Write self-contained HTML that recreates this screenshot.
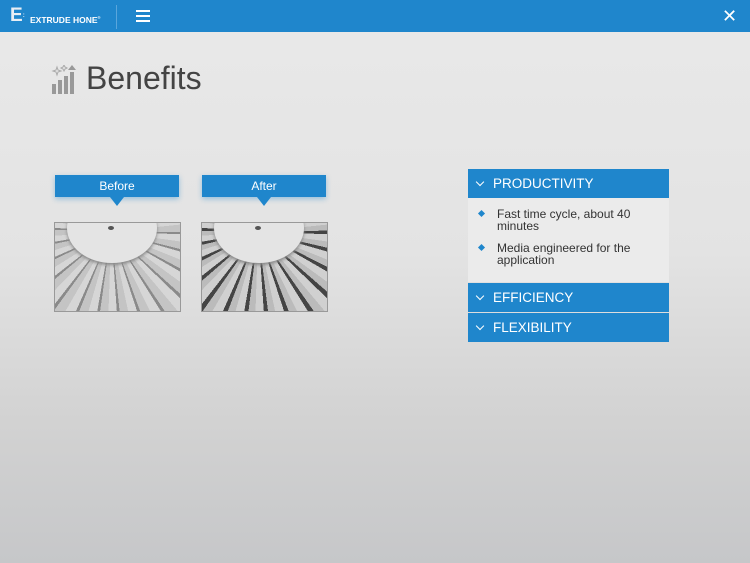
<!DOCTYPE html>
<html><head><style>
*{margin:0;padding:0;box-sizing:border-box}
body{width:750px;height:563px;overflow:hidden;font-family:"Liberation Sans",sans-serif;background:linear-gradient(180deg,#e9e9e9 0%,#e3e3e3 45%,#d2d2d2 75%,#c6c7c9 100%);position:relative}
.hdr{position:absolute;left:0;top:0;width:750px;height:32px;background:#1f86cc}
.abs{position:absolute}
.tag{position:absolute;height:22px;background:#1f86cc;color:#fff;font-size:12px;text-align:center;line-height:22px;box-shadow:0 2px 5px rgba(31,134,204,.4)}
.tag:after{content:"";position:absolute;left:50%;margin-left:-7px;top:22px;border-left:7px solid transparent;border-right:7px solid transparent;border-top:9px solid #1f86cc}
.img{position:absolute;top:222px;width:127px;height:90px;border:1px solid #999;overflow:hidden;background:repeating-conic-gradient(from 0deg at 45% 10%,#c4c4c4 0 6deg,#8a8a8a 6deg 8deg,#d6d6d6 8deg 14deg)}
.img:before{content:"";position:absolute;left:12px;top:-30px;width:90px;height:70px;border-radius:50%;background:#e4e4e4;box-shadow:0 2px 3px #888}
.img:after{content:"";position:absolute;left:53px;top:3px;width:6px;height:4px;border-radius:50%;background:#555}
.acc{position:absolute;left:468px;width:201px;background:#1f86cc;color:#fff;font-size:13.5px;height:29px;line-height:29px;padding-left:25px}
.acc:before{content:"";position:absolute;left:9px;top:10px;width:5px;height:5px;border-right:1.3px solid #fff;border-bottom:1.3px solid #fff;transform:rotate(45deg)}
.li{position:absolute;left:497px;font-size:12px;color:#333;line-height:12px;width:165px}
.dot{position:absolute;left:479px;width:5px;height:5px;background:#1f86cc;transform:rotate(45deg)}
</style></head><body>
<div class="hdr">
 <div class="abs" style="left:10px;top:7px;color:#e8eef4;font-weight:bold;font-size:19px;line-height:18px">E<span style="font-size:6px;vertical-align:top">:</span></div>
 <div class="abs" style="left:30px;top:15px;color:#fff;font-weight:bold;font-size:8.5px">EXTRUDE HONE<sup style="font-size:4px">®</sup></div>
 <div class="abs" style="left:116px;top:5px;width:1px;height:24px;background:#5aa6dc"></div>
 <div class="abs" style="left:136px;top:10px;width:14px;height:2px;background:#fff;box-shadow:0 5px 0 #fff,0 10px 0 #fff"></div>
 <div class="abs" style="left:722px;top:6px;color:#fff;font-size:18px">✕</div>
</div>
<svg class="abs" style="left:51px;top:65px" width="27" height="30"><g fill="#999"><rect x="1" y="19" width="4" height="10"/><rect x="7" y="15" width="4" height="14"/><rect x="13" y="11" width="4" height="18"/><rect x="19" y="7" width="4" height="22"/></g><path d="M21 0l4 5h-8z" fill="#999"/><g stroke="#aaa" fill="none" stroke-width="1"><path d="M6 2l1 3 3 1-3 1-1 3-1-3-3-1 3-1z"/><path d="M13 0l1 2 2 1-2 1-1 2-1-2-2-1 2-1z"/></g></svg>
<div class="abs" style="left:86px;top:60px;font-size:32px;color:#444">Benefits</div>
<div class="tag" style="left:55px;top:175px;width:124px">Before</div>
<div class="tag" style="left:202px;top:175px;width:124px">After</div>
<div class="img" style="left:54px"></div>
<div class="img" style="left:201px;background:repeating-conic-gradient(from 0deg at 45% 10%,#bbb 0 5deg,#444 5deg 8deg,#d0d0d0 8deg 14deg)"></div>
<div class="acc" style="top:169px">PRODUCTIVITY</div>
<div class="abs" style="left:468px;top:198px;width:201px;height:84px;background:#ebebeb"></div>
<div class="dot" style="top:211px"></div>
<div class="li" style="top:208px">Fast time cycle, about 40 minutes</div>
<div class="dot" style="top:245px"></div>
<div class="li" style="top:242px">Media engineered for the application</div>
<div class="acc" style="top:283px">EFFICIENCY</div>
<div class="acc" style="top:313px">FLEXIBILITY</div>
</body></html>
